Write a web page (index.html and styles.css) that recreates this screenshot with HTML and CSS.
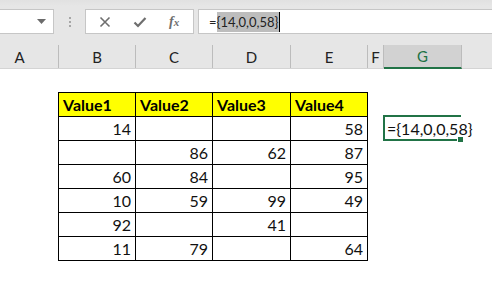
FILE: index.html
```html
<!DOCTYPE html>
<html>
<head>
<meta charset="utf-8">
<link rel="stylesheet" href="styles.css">
</head>
<body>
<div class="app">
  <div class="toolbar">
    <div class="namebox">
      <svg class="caret" width="9" height="5" viewBox="0 0 9 5"><path d="M0 0H9L4.5 5Z" fill="#6b6b6b"/></svg>
    </div>
    <div class="grip"><span></span><span></span><span></span></div>
    <div class="buttons">
      <svg width="12" height="12" viewBox="0 0 12 12"><path d="M1.5 1.5L10.5 10.5M10.5 1.5L1.5 10.5" stroke="#6e6e6e" stroke-width="1.6"/></svg>
      <svg width="14" height="12" viewBox="0 0 14 12"><path d="M1.5 6.5L5 10L12.5 2" stroke="#6e6e6e" stroke-width="2.2" fill="none"/></svg>
      <span class="fx">f<span class="x">x</span></span>
    </div>
    <div class="formula"><span class="eq">=</span><span class="sel">{14,0,0,58}</span><span class="cursor"></span></div>
  </div>
  <div class="colheads">
    <div class="ch w-a">A</div>
    <div class="ch w-b">B</div>
    <div class="ch w-c">C</div>
    <div class="ch w-d">D</div>
    <div class="ch w-e">E</div>
    <div class="ch w-f">F</div>
    <div class="ch w-g active">G</div>
    <div class="ch rest"></div>
  </div>
  <div class="sheet">
    <table class="data">
      <colgroup><col class="cb"><col class="cc"><col class="cd"><col class="ce"></colgroup>
      <tr class="head"><td>Value1</td><td>Value2</td><td>Value3</td><td>Value4</td></tr>
      <tr><td>14</td><td></td><td></td><td>58</td></tr>
      <tr><td></td><td>86</td><td>62</td><td>87</td></tr>
      <tr><td>60</td><td>84</td><td></td><td>95</td></tr>
      <tr><td>10</td><td>59</td><td>99</td><td>49</td></tr>
      <tr><td>92</td><td></td><td>41</td><td></td></tr>
      <tr><td>11</td><td>79</td><td></td><td>64</td></tr>
    </table>
    <div class="gcell"><span class="gtext">={14,0,0,58}</span><span class="handle"></span></div>
  </div>
</div>
</body>
</html>
```

FILE: styles.css
```css
html, body { margin: 0; padding: 0; background: #fff; }
body { width: 492px; height: 281px; overflow: hidden; font-family: "Lato", "Liberation Sans", sans-serif; }
.app { display: flex; flex-direction: column; width: 492px; height: 281px; }

.toolbar {
  height: 45px; box-sizing: border-box; padding-top: 9px;
  background: linear-gradient(#e1e1e1 0px, #e6e6e6 6px, #e6e6e6 100%);
  display: flex; align-items: flex-start;
}
.namebox {
  width: 54px; height: 25px; box-sizing: border-box; background: #fff;
  border: 1px solid #c6c6c6; border-left: none;
  display: flex; align-items: center; justify-content: flex-end; padding-right: 7px;
}
.caret { display: block; margin-top: -1px; }
.grip { width: 31px; height: 25px; display: flex; flex-direction: column; align-items: center; justify-content: center; gap: 2px; }
.grip span { width: 2px; height: 2px; background: #a6a6a6; display: block; }
.buttons {
  width: 109px; height: 25px; box-sizing: border-box; background: #fff; border: 1px solid #c6c6c6;
  display: flex; align-items: center; padding-left: 13px; gap: 0;
}
.buttons svg:first-child { margin-right: 22px; }
.buttons svg:nth-child(2) { margin-right: 22px; }
.fx { font-family: "Liberation Serif", serif; font-style: italic; color: #6e6e6e; font-size: 14px; font-weight: bold; }
.fx .x { font-size: 11px; }
.formula {
  margin-left: 4px; flex: 1; height: 25px; box-sizing: border-box; background: #fff;
  border: 1px solid #c6c6c6; border-right: none;
  display: flex; align-items: center; padding-left: 10px;
  font-family: "Lato", "Liberation Sans", sans-serif; font-size: 13px; color: #222;
}
.eq { line-height: 20px; }
.sel { background: #bdbdbd; line-height: 20px; padding-right: 1px; }
.cursor { width: 1px; height: 20px; background: #000; }

.colheads { height: 24px; display: flex; background: #e6e6e6; border-bottom: 1px solid #d4d4d4; box-sizing: border-box; }
.ch {
  box-sizing: border-box; border-right: 1px solid #bcbcbc; height: 23px;
  display: flex; align-items: center; justify-content: center;
  font-family: "Lato", "Liberation Sans", sans-serif; font-size: 15px; color: #222;
}
.w-a { width: 59px; padding-right: 19px; }
.w-b { width: 77px; }
.w-c { width: 77px; }
.w-d { width: 78px; }
.w-e { width: 77px; }
.w-f { width: 16px; }
.w-g { width: 78px; }
.ch.active { background: #d2d2d2; color: #217346; border-bottom: 2px solid #217346; height: 24px; }
.ch.rest { flex: 1; border-right: none; }

.sheet {
  flex: 1; display: grid;
  grid-template-columns: 58px 77px 77px 78px 77px 16px 78px 1fr;
  grid-template-rows: 23px repeat(7, 24px) 1fr;
}
.data {
  grid-column: 2 / 6; grid-row: 2 / 9; border-collapse: collapse; table-layout: fixed;
  width: 310px; height: 169px; align-self: start; justify-self: start;
}
.cb { width: 77px; } .cc { width: 77px; } .cd { width: 78px; } .ce { width: 77px; }
.data td {
  border: 1px solid #000; height: 23px; padding: 0 4px 0 4px; box-sizing: border-box;
  text-align: right; font-size: 16px; color: #111; line-height: 22px; vertical-align: bottom;
}
.data tr.head td { background: #ffff00; font-weight: bold; text-align: left; color: #000; }

.gcell {
  grid-column: 7; grid-row: 3; position: relative; box-sizing: border-box;
  border: 2px solid #217346; border-right: none; margin-top: -1px; height: 26px;
  display: flex; align-items: center; padding-left: 2px; white-space: nowrap;
}
.gtext { font-size: 16px; color: #111; position: relative; z-index: 1; }
.handle { position: absolute; right: -3px; bottom: -4px; width: 5px; height: 5px; background: #217346; border: 1px solid #fff; }
```
